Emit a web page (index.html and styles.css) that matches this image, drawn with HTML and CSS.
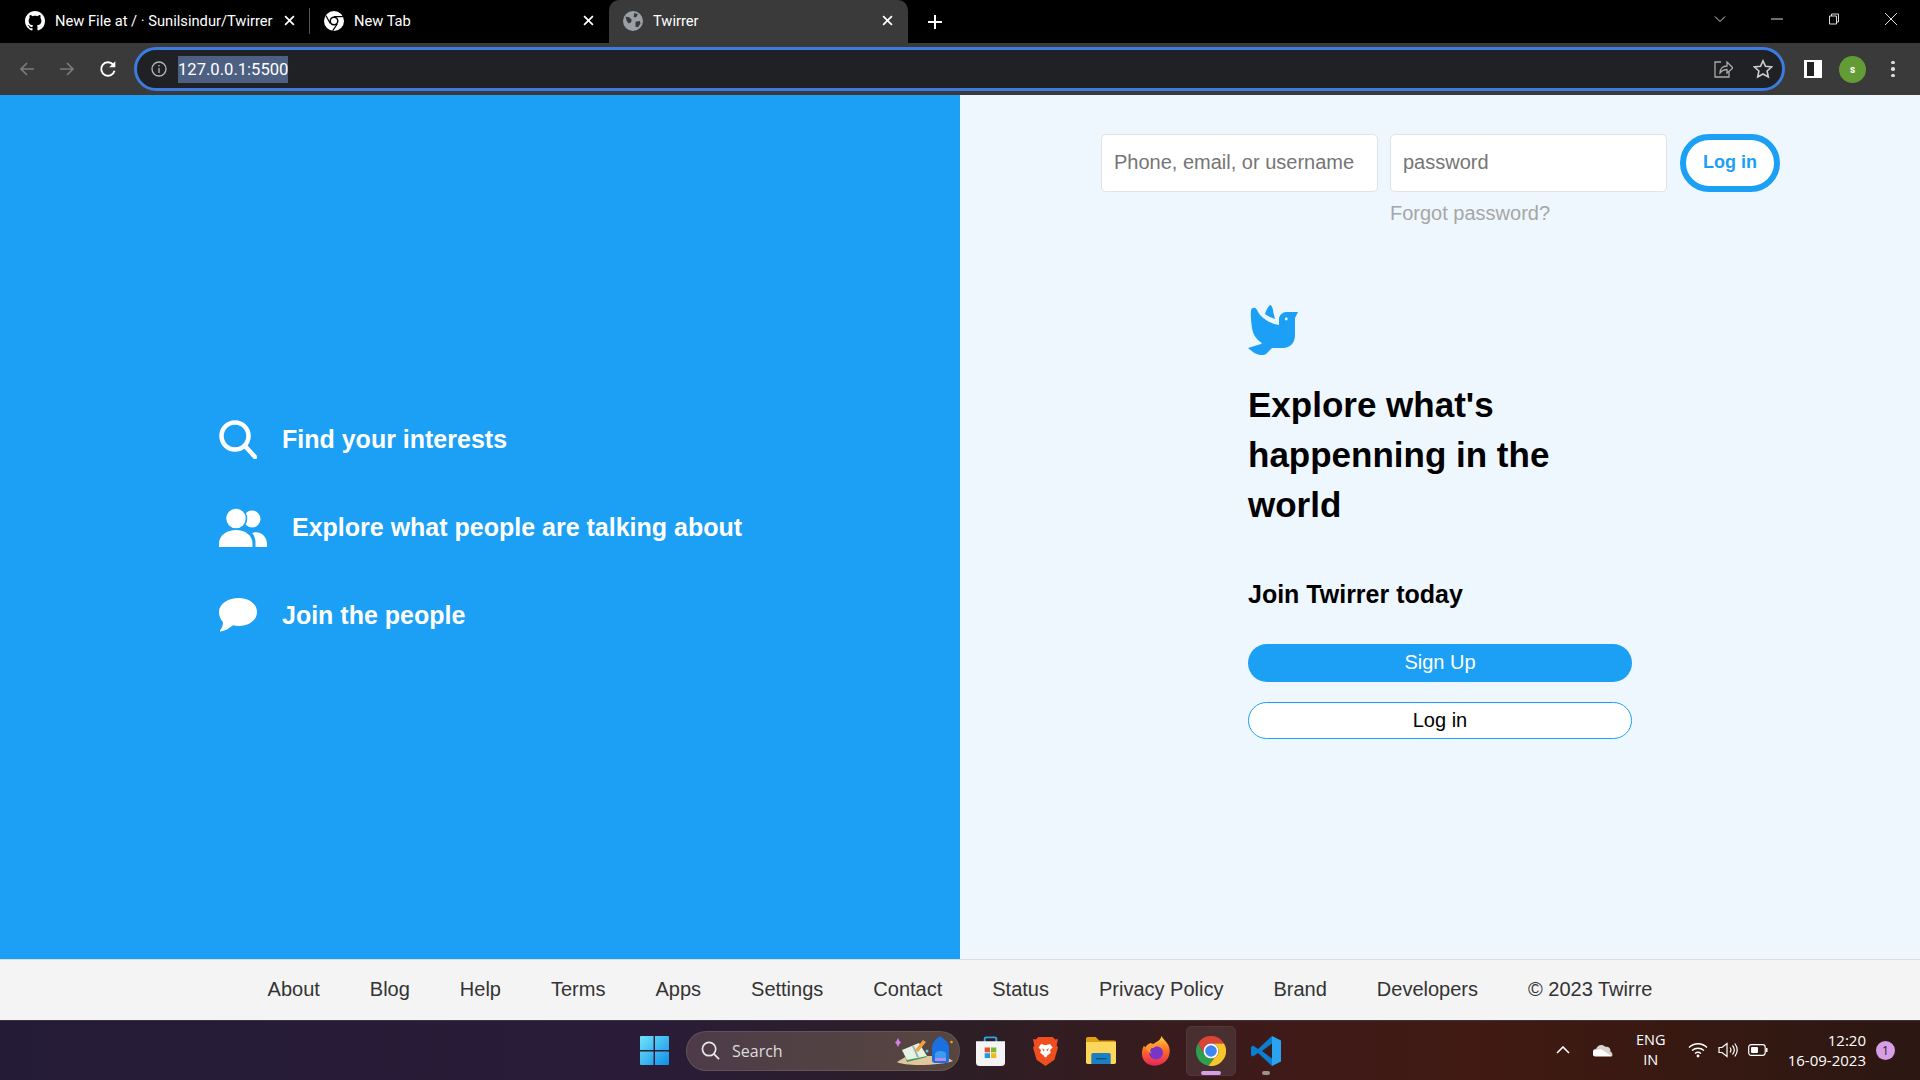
FILE: index.html
```html
<!DOCTYPE html>
<html lang="en">
<head>
<meta charset="utf-8">
<title>Twirrer</title>
<link rel="stylesheet" href="styles.css">
</head>
<body>
<div class="tabstrip">
  <div class="tab tab-first">
    <svg class="fav" viewBox="0 0 16 16"><path fill="#fff" d="M8 0C3.58 0 0 3.58 0 8c0 3.54 2.29 6.53 5.47 7.59.4.07.55-.17.55-.38 0-.19-.01-.82-.01-1.49-2.01.37-2.53-.49-2.69-.94-.09-.23-.48-.94-.82-1.13-.28-.15-.68-.52-.01-.53.63-.01 1.08.58 1.23.82.72 1.21 1.87.87 2.33.66.07-.52.28-.87.51-1.07-1.78-.2-3.64-.89-3.64-3.95 0-.87.31-1.59.82-2.15-.08-.2-.36-1.02.08-2.12 0 0 .67-.21 2.2.82.64-.18 1.32-.27 2-.27s1.36.09 2 .27c1.53-1.04 2.2-.82 2.2-.82.44 1.1.16 1.92.08 2.12.51.56.82 1.27.82 2.15 0 3.07-1.87 3.75-3.65 3.95.29.25.54.73.54 1.48 0 1.07-.01 1.93-.01 2.2 0 .21.15.46.55.38A8.01 8.01 0 0 0 16 8c0-4.42-3.58-8-8-8z"/></svg>
    <span class="tab-title">New File at / · Sunilsindur/Twirrer</span>
    <svg class="tab-x" viewBox="0 0 10 10"><path d="M1 1l8 8M9 1l-8 8"/></svg>
  </div>
  <div class="tab-sep"></div>
  <div class="tab tab-second">
    <svg class="fav" viewBox="0 0 16 16"><circle cx="8" cy="8" r="8" fill="#fff"/><circle cx="8" cy="8" r="3.6" fill="#000"/><circle cx="8" cy="8" r="2.4" fill="#fff"/><path d="M8 4.4h7.2M5 10l-3.4-6.2M10.6 10.4l-3.7 5.5" stroke="#000" stroke-width="1" fill="none"/></svg>
    <span class="tab-title">New Tab</span>
    <svg class="tab-x" viewBox="0 0 10 10"><path d="M1 1l8 8M9 1l-8 8"/></svg>
  </div>
  <div class="tab tab-active">
    <svg class="fav" viewBox="0 0 16 16"><circle cx="8" cy="8" r="8" fill="#9aa0a6"/><path fill="#3a3a3a" d="M2 4.5l3 .5 2 2-.5 2L4.5 10 3 8zM9 1.5l3 1L10.500 5 8.500 5zM10 8.500l3.500-.5.500 2L12 13l-2-.5z"/></svg>
    <span class="tab-title">Twirrer</span>
    <svg class="tab-x" viewBox="0 0 10 10"><path d="M1 1l8 8M9 1l-8 8"/></svg>
  </div>
  <svg class="new-tab" viewBox="0 0 14 14"><path d="M7 0v14M0 7h14"/></svg>
  <div class="win-controls">
    <svg class="win-ico" viewBox="0 0 12 12"><path d="M1 3.500l5 5 5-5"/></svg>
    <svg class="win-ico" viewBox="0 0 12 12"><path d="M0 6h12"/></svg>
    <svg class="win-ico" viewBox="0 0 12 12"><path d="M1.500 3h7v8h-7zM3.500 3V1h7v8H8.500"/></svg>
    <svg class="win-ico" viewBox="0 0 12 12"><path d="M0 0l12 12M12 0L0 12"/></svg>
  </div>
</div>

<div class="toolbar">
  <svg class="nav-ico dim" viewBox="0 0 16 16"><path d="M15 8H2M8 2L2 8l6 6"/></svg>
  <svg class="nav-ico dim" viewBox="0 0 16 16"><path d="M1 8h13M8 2l6 6-6 6"/></svg>
  <svg class="nav-ico reload" viewBox="0 0 16 16"><path d="M13.800 9.500A6 6 0 1 1 12.500 4"/><path class="solid" d="M14.500 1v5.500H9z"/></svg>
  <div class="omnibox">
    <svg class="info" viewBox="0 0 16 16"><circle cx="8" cy="8" r="7"/><path d="M8 7v5M8 4v1.600"/></svg>
    <span class="url">127.0.0.1:5500</span>
    <svg class="omni-ico share" viewBox="0 0 20 20"><path d="M8 3H2v15h14v-5"/><path d="M7 14c0-5 3-7 7-7V3l6 6-6 5v-3.500c-3 0-5 1-7 3.500z"/></svg>
    <svg class="omni-ico star" viewBox="0 0 20 20"><path d="M10 1.800l2.500 5.500 6 .7-4.400 4 1.200 6L10 15l-5.300 3 1.200-6-4.400-4 6-.7z"/></svg>
  </div>
  <div class="side-panel"></div>
  <div class="avatar">s</div>
  <div class="kebab"><i></i><i></i><i></i></div>
</div>

<main class="page">
  <section class="left">
    <ul class="features">
      <li class="feature">
        <svg class="fi fi-search" viewBox="0 0 38 39"><circle cx="16" cy="16" r="13.500"/><path d="M26 26l10 11"/></svg>
        <span>Find your interests</span>
      </li>
      <li class="feature">
        <svg class="fi fi-people" viewBox="0 0 48 39"><circle cx="33" cy="11" r="8.500"/><circle class="front" cx="17" cy="10.500" r="10.500"/><path d="M0 39v-3C0 27 8 22 17 22s16.500 5 16.500 14v3z"/><path d="M35 24.500C42 23 48 29 48 36v3H36.500v-4c0-4-1-7.500-3.500-10z"/></svg>
        <span>Explore what people are talking about</span>
      </li>
      <li class="feature">
        <svg class="fi fi-chat" viewBox="0 0 38 34"><path d="M20 0c10 0 18 6 18 14s-8 14-18 14c-2 0-4-.2-6-.8C10 30.500 6 33 1.500 33.500 1 33.500.8 33 1 32.500 3 30 4 27 4 24.200 1.500 21.500 0 18 0 14 0 6 9 0 20 0z"/></svg>
        <span>Join the people</span>
      </li>
    </ul>
  </section>
  <section class="right">
    <form class="login-bar">
      <div class="field"><input type="text" placeholder="Phone, email, or username"></div>
      <div class="field">
        <input type="password" placeholder="password">
        <a class="forgot">Forgot password?</a>
      </div>
      <button type="button" class="login-small">Log in</button>
    </form>
    <div class="hero">
      <svg class="bird" viewBox="0 0 50 50"><path d="M5 3C7 2 9 4 10 7c3 5 10 11 21 13v-6c0-4 4-7 7-7h12l-3 6v17c0 8-5 13-12 13H24l-6 6c-3 2-9 1-13-2l-5-4 13-4 1-1C9 35 5 30 4 23 3 16 2.500 9 3 6c0-2 1-3 2-3z"/><path d="M17 9c1-4 3-7 5-9 2 0 3 4 3.500 8L27 14c-4-1-7-3-10-5z"/><circle class="bird-eye" cx="38.300" cy="14" r="1.400"/></svg>
      <h1 class="headline">Explore what's happenning in the world</h1>
      <h2 class="join">Join Twirrer today</h2>
      <a class="btn btn-primary">Sign Up</a>
      <a class="btn btn-outline">Log in</a>
    </div>
  </section>
</main>

<footer class="footer">
  <a>About</a><a>Blog</a><a>Help</a><a>Terms</a><a>Apps</a><a>Settings</a><a>Contact</a><a>Status</a><a>Privacy Policy</a><a>Brand</a><a>Developers</a><a>© 2023 Twirre</a>
</footer>

<div class="taskbar">
  <div class="task-center">
    <svg class="winlogo" viewBox="0 0 30 30"><defs><linearGradient id="wg" x1="0" y1="0" x2="1" y2="1"><stop offset="0" stop-color="#6fe3fb"/><stop offset="1" stop-color="#0f8fe6"/></linearGradient></defs><path fill="url(#wg)" d="M0 1a1 1 0 0 1 1-1h13v14.500H0zM15.500 0H29a1 1 0 0 1 1 1v13.500H15.500zM0 16h14v14H1a1 1 0 0 1-1-1zM15.500 16H30v13a1 1 0 0 1-1 1H15.500z"/></svg>
    <div class="searchbox">
      <svg class="sb-ico" viewBox="0 0 20 20"><circle cx="8.500" cy="8.500" r="7"/><path d="M13.500 13.500l5.500 5.500"/></svg>
      <span>Search</span>
      <svg class="sb-art" viewBox="0 0 58 30"><path fill="#e2c79c" d="M2 26l10-6h38l8 5c-8 4-48 6-56 1z"/><path fill="#3f9a5a" d="M9 17l3 9 20-5-2-3z"/><path fill="#e6f3e4" d="M7 14l17-7 8 13-20 4z"/><path fill="#9fb4a8" d="M17 10l2 0 5 11-2 .5z"/><path fill="#f0a040" d="M20 14l8-10 3 2-8 10z"/><path fill="#1b6fe0" d="M37 24V12c0-6 4-9 8-12 4 3 9 6 9 12v12c0 3-2 3-4 3h-9c-2 0-4 0-4-3z"/><path fill="#3e9bf0" d="M40 25v-7c0-4 11-4 11 0v7z"/><path fill="#b48cf0" d="M40 22h11v3H40z"/><path fill="#d77ce8" d="M3 2l1.500 3 1.500 1.500-1.500 1.500L3 11 1.500 8 0 6.500 1.500 5z"/><circle cx="32" cy="15" r="1.500" fill="#50d0d0"/><circle cx="56.500" cy="6" r="1.300" fill="#f0a820"/></svg>
    </div>
    <svg class="tb-ico tb-store" viewBox="0 0 30 34" preserveAspectRatio="none"><path d="M9 7V3a1.500 1.500 0 0 1 1.500-1.500h9A1.500 1.500 0 0 1 21 3v4" fill="none" stroke="#2aa6e0" stroke-width="2"/><path fill="#f4f4f4" d="M0 6h30v24a4 4 0 0 1-4 4H4a4 4 0 0 1-4-4z"/><path fill="#e8502a" d="M9 13h5.500v5.500H9z"/><path fill="#7cb82a" d="M15.500 13H21v5.500h-5.500z"/><path fill="#1b9ce0" d="M9 19.500h5.500V25H9z"/><path fill="#f8b818" d="M15.500 19.500H21V25h-5.500z"/></svg>
    <svg class="tb-ico tb-brave" viewBox="0 0 28 34" preserveAspectRatio="none"><path fill="#f04e1e" d="M6 1h16l3 3 3-.5-1.500 7L28 13l-4 14-10 7-10-7-4-14 1.500-2L0 3.500 3 4z"/><path fill="#fff" d="M9 9l5 1.500L19 9l3 4-3 3 1 3-4 3-2 4-2-4-4-3 1-3-3-3z"/><path fill="#f04e1e" d="M10 14l3 1.500-1 2zM18 14l-3 1.500 1 2zM12 24h4l-2 2z"/></svg>
    <svg class="tb-ico tb-folder" viewBox="0 0 34 32" preserveAspectRatio="none"><path fill="#e0a010" d="M0 2a2 2 0 0 1 2-2h9l4 4h17a2 2 0 0 1 2 2v4H0z"/><path fill="#fcd75c" d="M0 6h34v24a2 2 0 0 1-2 2H2a2 2 0 0 1-2-2z"/><path fill="#1c7fc4" d="M6 21a2 2 0 0 1 2-2h18a2 2 0 0 1 2 2v11H6z"/><path fill="#0c4f86" d="M11 25h12v1.500H11z"/></svg>
    <svg class="tb-ico tb-fox" viewBox="0 0 30 34" preserveAspectRatio="none"><defs><linearGradient id="ff" x1="0" y1="0" x2="0" y2="1"><stop offset="0" stop-color="#ffd23a"/><stop offset=".5" stop-color="#ff6a2a"/><stop offset="1" stop-color="#e8245a"/></linearGradient></defs><path fill="url(#ff)" d="M21 0c1 3 5 6 7 10 3 6 2 14-3 19-6 6-15 6-21 1C-1 25-1 17 2 11l2 2c1-3 3-4 5-5l3 1c3-2 8-4 9-9z"/><circle cx="15" cy="19" r="7.500" fill="#7a35c8"/><path fill="#ff9a2a" d="M4 12c4-3 9-4 12-1-2 1-4 3-6 3-2 2-1 4 0 6-3-2-6-4-6-8z"/></svg>
    <div class="chrome-slot">
      <svg class="tb-chrome" viewBox="0 0 30 30"><path fill="#db4437" d="M2 7.500A15 15 0 0 1 28 7.500H15A7.500 7.500 0 0 0 8.500 18.750z"/><path fill="#2e9e4f" d="M2 7.500l6.500 11.250a7.500 7.500 0 0 0 10.250 2.750L12.500 29.800A15 15 0 0 1 2 7.500z"/><path fill="#f5c52c" d="M28 7.500A15 15 0 0 1 12.500 29.800l6.250-8.300A7.500 7.500 0 0 0 15 7.500z"/><circle cx="15" cy="15" r="7.500" fill="#fff"/><circle cx="15" cy="15" r="5.800" fill="#3f86f0"/></svg>
      <i class="run-pill"></i>
    </div>
    <div class="code-slot">
      <svg class="tb-ico tb-code" viewBox="0 0 30 30"><path fill="#2aa4f0" d="M21 0l9 4.500v21L21 30z"/><path fill="#0a7fd0" d="M21 0L7 13 2 9.500 0 11v8l2 1.500L7 17l14 13v-7.500L11 15l10-7.500z"/></svg>
      <i class="run-dot"></i>
    </div>
  </div>
  <div class="tray">
    <svg class="tray-ico chev" viewBox="0 0 14 8"><path d="M1 7l6-6 6 6"/></svg>
    <svg class="cloud" viewBox="0 0 22 14"><path fill="#d8d4d2" d="M4 13a4 4 0 0 1-.5-8C5 1 10-1 13.500 3 17 2 20 5 19 8c2 1 3 3 2 5z"/><path fill="#fff" d="M3 13.500a3.500 3.500 0 0 1 0-7l6-1 12 8z"/></svg>
    <div class="lang"><span>ENG</span><span>IN</span></div>
    <svg class="tray-ico wifi" viewBox="0 0 20 16"><path d="M1 5.500c5-5 13-5 18 0M4 8.500c3.500-3 8.500-3 12 0M7 11.500c1.800-1.400 4.200-1.400 6 0"/><circle class="solid" cx="10" cy="14" r="1.400"/></svg>
    <svg class="tray-ico vol" viewBox="0 0 20 16"><path d="M1 5.500h3L9 1.500v13l-5-4H1zM12 5.500c1.200 1.500 1.200 3.500 0 5M14.500 3.500c2.200 2.700 2.200 6.300 0 9M16.800 1.500c3 4 3 9 0 13"/></svg>
    <svg class="tray-ico batt" viewBox="0 0 20 12"><rect x=".7" y=".7" width="16.500" height="10.600" rx="2.500"/><rect class="solid" x="3" y="3" width="7" height="6" rx="1"/><path class="solid" d="M18 4h1.500v4H18z"/></svg>
    <div class="clock"><span>12:20</span><span>16-09-2023</span></div>
    <div class="badge">1</div>
  </div>
</div>
</body>
</html>
```
FILE: styles.css
```css
* { box-sizing: border-box; }
html, body { height: 100%; }
body {
  margin: 0;
  height: 1080px;
  overflow: hidden;
  display: flex;
  flex-direction: column;
  font-family: "Liberation Sans", Arial, sans-serif;
}

/* browser tab strip */
.tabstrip {
  height: 43px;
  flex: none;
  background: #000;
  display: flex;
  align-items: stretch;
  color: #fff;
  font: 14.7px Roboto, "Liberation Sans", sans-serif;
}
.tab {
  display: flex;
  align-items: center;
  height: 43px;
  padding: 0 15px 2px 14px;
  flex: none;
}
.tab-first { width: 309px; padding-left: 25px; padding-right: 14px; }
.tab-second { width: 299px; }
.tab-active { width: 299px; background: #3a3a3a; border-radius: 10px 10px 0 0; }
.tab-sep { width: 1px; height: 26px; margin-top: 8px; background: #555; flex: none; }
.fav { width: 20px; height: 20px; flex: none; margin-right: 10px; }
.tab-title { flex: 1; white-space: nowrap; overflow: hidden; }
.tab-x { width: 11px; height: 11px; stroke: #fff; stroke-width: 1.6; fill: none; flex: none; margin-left: 4px; }
.new-tab { width: 14px; height: 14px; stroke: #fff; stroke-width: 2; fill: none; flex: none; align-self: center; margin: 0 0 0 20px; }
.win-controls { margin-left: auto; display: flex; align-items: center; gap: 45px; padding: 0 23px 6px 0; }
.win-ico { width: 12px; height: 12px; stroke: #ddd; stroke-width: 1; fill: none; }

/* browser toolbar */
.toolbar {
  height: 52px;
  flex: none;
  background: #3a3a3a;
  display: flex;
  align-items: center;
  padding: 0 0 0 19px;
}
.nav-ico { width: 16px; height: 16px; stroke: #fff; stroke-width: 1.7; fill: none; flex: none; margin-right: 24px; }
.nav-ico.dim { stroke: #7b7b7b; }
.nav-ico.reload { width: 18px; height: 18px; margin-right: 22px; }
.nav-ico .solid { fill: #fff; stroke: none; }
.omnibox {
  width: 1651px;
  height: 44px;
  margin-left: -5px;
  border: 3px solid #3c7be0;
  border-radius: 22px;
  background: #202124;
  display: flex;
  align-items: center;
  flex: none;
  padding: 0 9px 0 14px;
}
.info { width: 16px; height: 16px; stroke: #b5b5b5; stroke-width: 1.3; fill: none; flex: none; margin-right: 11px; }
.url { background: #4d6082; color: #fff; font: 16.6px/27px Roboto, "Liberation Sans", sans-serif; }
.omni-ico { width: 20px; height: 20px; stroke: #aaa; stroke-width: 1.3; fill: none; flex: none; }
.share { margin-left: auto; margin-right: 20px; }
.star { stroke: #ccc; stroke-width: 1.6; }
.side-panel { width: 18px; height: 18px; border: 2px solid #fff; border-left-width: 3px; border-right-width: 8px; margin-left: 19px; flex: none; background: #222; }
.avatar { width: 27px; height: 27px; border-radius: 50%; background: #639c37; color: #fff; font: bold 10px/27px Roboto, sans-serif; text-align: center; margin-left: 17px; flex: none; }
.kebab { display: flex; flex-direction: column; gap: 3px; margin-left: 25px; flex: none; }
.kebab i { width: 3.5px; height: 3.5px; border-radius: 50%; background: #ddd; display: block; }

/* page */
.page { flex: 1; display: flex; min-height: 0; }
.left {
  width: 960px;
  flex: none;
  background: #1ca0f5;
  display: flex;
  align-items: center;
  padding: 0 0 0 219px;
}
.features { list-style: none; margin: 0; padding: 0; display: flex; flex-direction: column; }
.feature { display: flex; align-items: center; color: #fff; font-weight: 700; font-size: 25px; height: 88px; }
.fi { fill: #fff; flex: none; }
.fi-search { width: 38px; height: 39px; margin-right: 25px; fill: none; stroke: #fff; stroke-width: 4.5; stroke-linecap: round; }
.fi-people { width: 48px; height: 39px; margin-right: 25px; }
.fi-people .front { stroke: #1ca0f5; stroke-width: 1.5; }
.fi-chat { width: 38px; height: 34px; margin-right: 25px; }

.right {
  flex: 1;
  background: #eff7fe;
  display: flex;
  flex-direction: column;
  padding: 39px 0 0 141px;
}
.login-bar { display: flex; align-items: flex-start; gap: 12px; }
.field { width: 277px; display: flex; flex-direction: column; }
.field input {
  height: 58px;
  width: 100%;
  border: 1px solid #dfe3e6;
  border-radius: 5px;
  background: #fff;
  padding: 0 12px 2px;
  font: 20px "Liberation Sans", Arial, sans-serif;
}
.field input::placeholder { color: #757575; opacity: 1; }
.forgot { color: #a6a6a6; font-size: 20px; line-height: 24px; margin-top: 9px; }
.login-small {
  width: 100px;
  height: 58px;
  margin-left: 1px;
  border: 6px solid #1ca0f5;
  border-radius: 29px;
  background: #fff;
  color: #1ca0f5;
  font: bold 18px "Liberation Sans", Arial, sans-serif;
  padding: 0 0 2px;
}
.hero { width: 384px; margin: 80px 0 0 147px; display: flex; flex-direction: column; }
.bird { width: 50px; height: 50px; fill: #1ca0f5; }
.bird-eye { fill: #eff7fe; }
.headline { margin: 25px 0 0; font-size: 35px; line-height: 50px; color: #000; font-weight: 700; width: 320px; }
.join { margin: 49px 0 0; font-size: 25px; line-height: 30px; color: #000; font-weight: 700; }
.btn { display: block; text-align: center; border-radius: 19px; font-size: 20px; }
.btn-primary { margin-top: 35px; height: 38px; line-height: 37px; background: #1ca0f5; color: #fff; }
.btn-outline { margin-top: 20px; height: 37px; line-height: 34px; background: #fff; color: #000; border: 1px solid #1ca0f5; }

/* footer */
.footer {
  height: 61px;
  flex: none;
  background: #f4f4f4;
  border-top: 1px solid #ddd;
  display: flex;
  justify-content: center;
  align-items: center;
  gap: 50px;
  padding-bottom: 2px;
  font-size: 20px;
  color: #333;
}

/* taskbar */
.taskbar {
  height: 60px;
  flex: none;
  background: linear-gradient(90deg, #241b36 0%, #2a1c38 33%, #2d1e26 50%, #3f1a18 67%, #401a12 78%, #2c1712 100%);
  border-top: 1px solid #3c3540;
  display: flex;
  align-items: center;
  position: relative;
  color: #fff;
  font: 15px "Open Sans", sans-serif;
}
.task-center { display: flex; align-items: center; margin-left: 640px; }
.winlogo { width: 29px; height: 29px; flex: none; }
.searchbox {
  width: 274px;
  height: 40px;
  margin-left: 17px;
  border-radius: 20px;
  background: linear-gradient(90deg, #4d3c48, #57463f);
  border: 1px solid rgba(255,255,255,.1);
  display: flex;
  align-items: center;
  padding: 0 6px 0 14px;
  font-size: 16px;
  color: #ddd;
}
.sb-ico { width: 19px; height: 19px; stroke: #e8e8e8; stroke-width: 1.8; fill: none; margin-right: 12px; flex: none; }
.sb-art { width: 58px; height: 30px; margin-left: auto; flex: none; }
.tb-ico { height: 30px; flex: none; }
.tb-store { width: 29px; margin-left: 16px; }
.tb-brave { width: 25px; margin-left: 28px; }
.tb-folder { width: 30px; margin-left: 28px; height: 27px; }
.tb-fox { width: 28px; margin-left: 26px; }
.chrome-slot {
  width: 50px; height: 50px; margin-left: 16px; border-radius: 5px;
  background: #4a2f30; border: 1px solid #513739; display: flex; align-items: center; justify-content: center; position: relative;
}
.tb-chrome { width: 30px; height: 30px; flex: none; }
.run-pill { position: absolute; bottom: 0; left: 14px; width: 20px; height: 4px; border-radius: 2px; background: #d6a0e8; }
.code-slot { position: relative; margin-left: 15px; display: flex; }
.tb-code { width: 30px; }
.run-dot { position: absolute; bottom: -9px; left: 11px; width: 8px; height: 4px; border-radius: 2px; background: #9e8f90; }
.tray { position: absolute; right: 0; top: 0; height: 58px; display: flex; align-items: center; }
.tray-ico { stroke: #fff; fill: none; flex: none; }
.tray-ico .solid { fill: #fff; stroke: none; }
.chev { width: 14px; height: 8px; stroke-width: 1.6; margin-right: 23px; }
.cloud { width: 20px; height: 13px; flex: none; margin-right: 22px; }
.lang { width: 32px; display: flex; flex-direction: column; align-items: center; line-height: 20px; font-size: 14.5px; margin-right: 21px; }
.wifi { width: 20px; height: 16px; stroke-width: 1.4; margin-right: 10px; }
.vol { width: 20px; height: 16px; stroke-width: 1.2; margin-right: 10px; }
.batt { width: 20px; height: 12px; stroke-width: 1.2; margin-right: 20px; }
.clock { display: flex; flex-direction: column; align-items: flex-end; line-height: 20px; margin-right: 10px; }
.badge { width: 19px; height: 19px; border-radius: 50%; background: #d79ee8; color: #222; font-size: 12px; line-height: 19px; text-align: center; margin-right: 25px; }
```
